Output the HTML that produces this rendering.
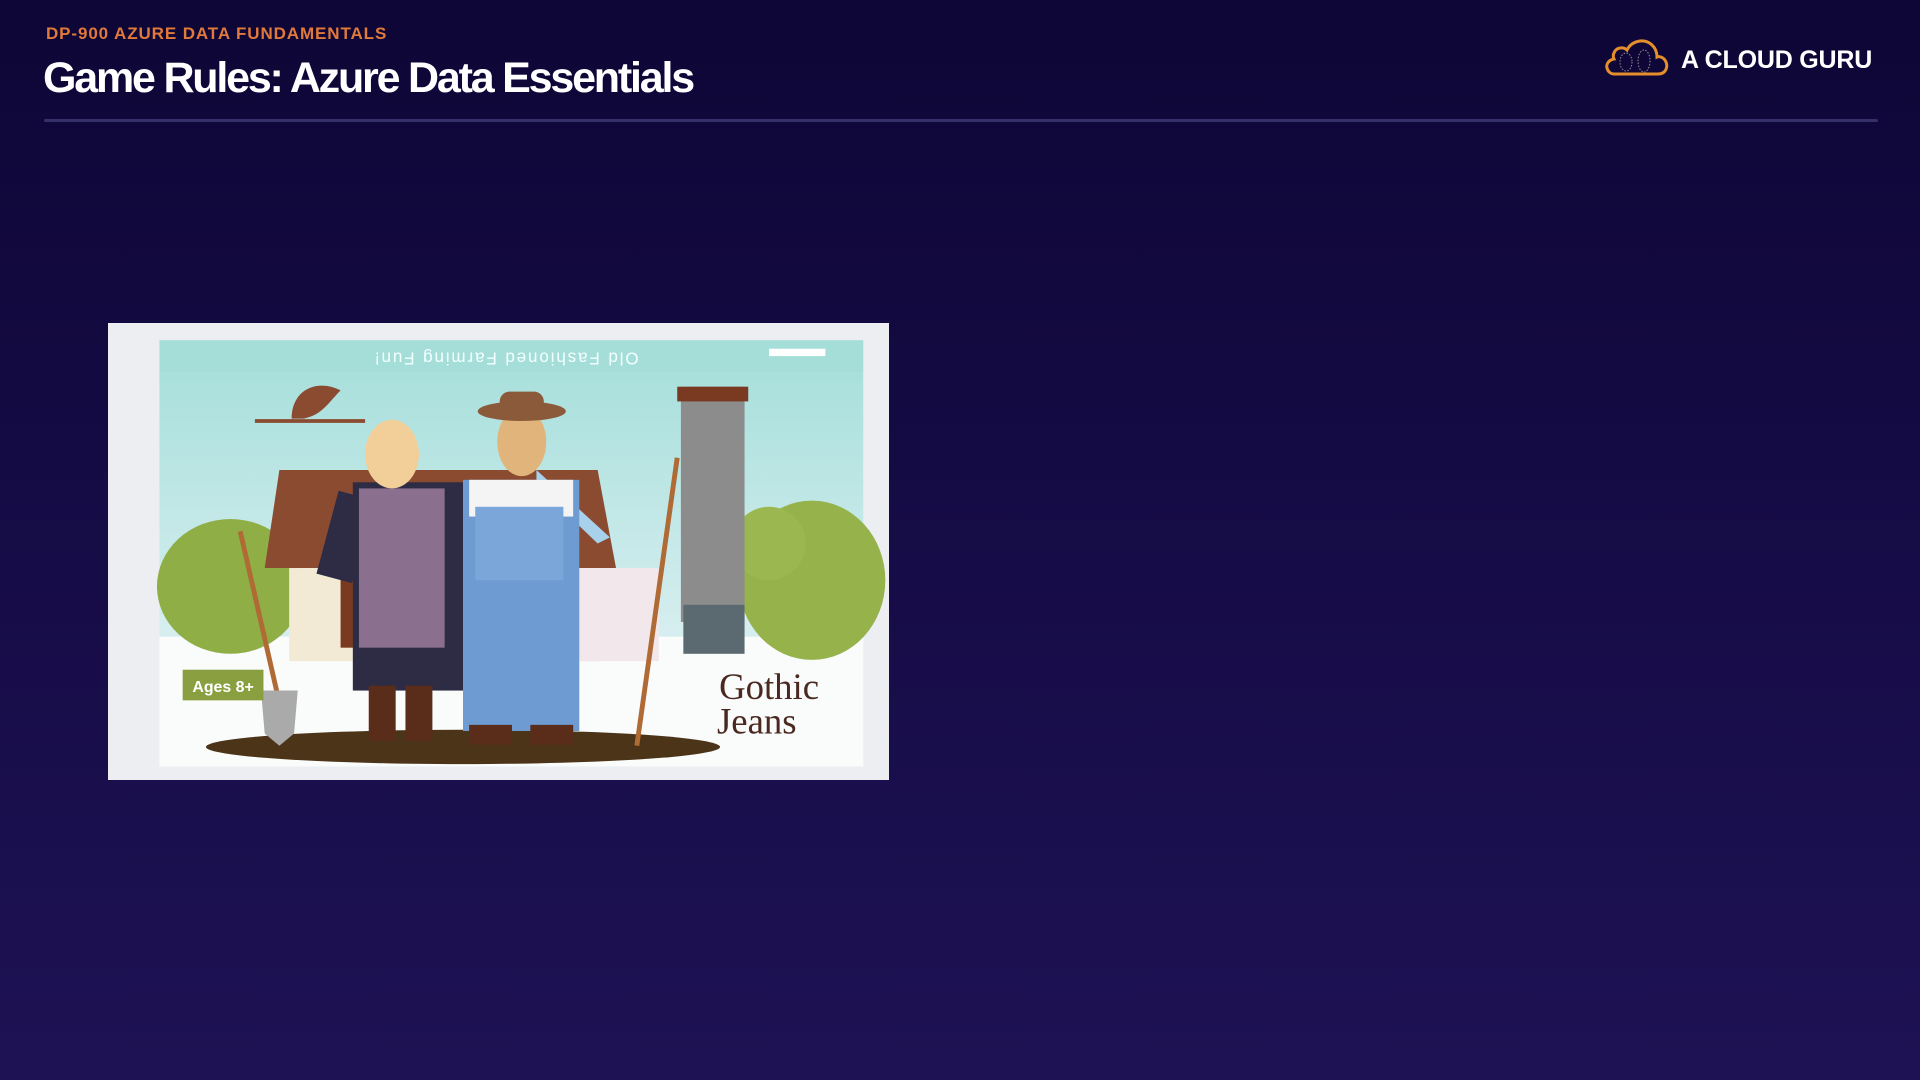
<!DOCTYPE html>
<html><head><meta charset="utf-8"><style>
html,body{margin:0;padding:0;}
body{width:1920px;height:1080px;overflow:hidden;background:linear-gradient(180deg,#0e0636 0%,#150b45 45%,#1e1254 100%);font-family:"Liberation Sans",sans-serif;position:relative;}
.sub{position:absolute;left:46px;top:24px;font-size:17px;font-weight:bold;color:#e0793a;letter-spacing:0.9px;}
.title{position:absolute;left:43px;top:54px;font-size:43px;font-weight:bold;color:#fff;letter-spacing:-2.2px;}
.line{position:absolute;left:44px;top:119px;width:1834px;height:3px;background:#35306a;border-radius:2px;}
.logo{position:absolute;left:1681px;top:46px;font-size:25px;font-weight:bold;color:#fff;letter-spacing:-0.2px;}
.img{position:absolute;left:108px;top:323px;width:781px;height:457px;}
</style></head><body>
<div class="sub">DP-900 AZURE DATA FUNDAMENTALS</div>
<div class="title">Game Rules: Azure Data Essentials</div>
<div class="line"></div>
<svg style="position:absolute;left:1604px;top:37px" width="66" height="40" viewBox="0 0 66 40">
<path d="M10 37 H54 C62 37 64 30 62 25 C60 20 55 19 53 20 C53 10 45 3 36 4 C29 5 25 9 23 13 C20 10 14 10 11 14 C9 17 9 20 10 22 C4 23 2 28 3 31 C4 35 7 37 10 37 Z" fill="none" stroke="#e58f2c" stroke-width="3"/>
<ellipse cx="22" cy="25" rx="6" ry="9" fill="none" stroke="#a08a90" stroke-width="1" stroke-dasharray="1.5 1.5"/>
<ellipse cx="40" cy="24" rx="6" ry="11" fill="none" stroke="#a08a90" stroke-width="1" stroke-dasharray="1.5 1.5"/>
</svg>
<div class="logo">A CLOUD GURU</div>
<svg class="img" viewBox="0 0 638 373" preserveAspectRatio="none">
<defs>
<linearGradient id="sky" x1="0" y1="0" x2="0" y2="1"><stop offset="0" stop-color="#a9e0dc"/><stop offset="1" stop-color="#d7eef0"/></linearGradient>
</defs>
<rect width="638" height="373" fill="#eceef1"/>
<rect x="42" y="14" width="575" height="348" fill="#fafbfb"/>
<rect x="42" y="14" width="575" height="26" fill="#a5ddd8"/>
<rect x="42" y="40" width="575" height="216" fill="url(#sky)"/>
<text x="325" y="34" transform="rotate(180 325 29)" text-anchor="middle" font-size="14" fill="#f4ffff" font-family="Liberation Sans" letter-spacing="1.5">Old Fashioned Farming Fun!</text>
<rect x="540" y="21" width="46" height="6" fill="#fff"/>
<ellipse cx="100" cy="215" rx="60" ry="55" fill="#8fae45"/>
<ellipse cx="575" cy="210" rx="60" ry="65" fill="#95b24b"/>
<ellipse cx="540" cy="180" rx="30" ry="30" fill="#9ab84f"/>
<polygon points="140,120 400,120 415,200 128,200" fill="#8a4b30"/>
<rect x="148" y="200" width="255" height="76" fill="#f3ead6"/>
<rect x="190" y="205" width="70" height="60" fill="#7a3a22"/>
<rect x="380" y="200" width="70" height="76" fill="#f2e8ec"/>
<polygon points="350,120 410,175 400,180 350,132" fill="#a8d2ec"/>
<rect x="468" y="52" width="52" height="192" fill="#8c8c8c"/>
<rect x="465" y="52" width="58" height="12" fill="#7a3a22"/>
<rect x="470" y="230" width="50" height="40" fill="#5a6a70"/>
<ellipse cx="290" cy="346" rx="210" ry="14" fill="#4b3418"/>
<line x1="108" y1="170" x2="140" y2="310" stroke="#b06a35" stroke-width="4"/>
<path d="M125 300 L155 300 L152 335 L140 345 L128 335 Z" fill="#aaaaaa"/>
<rect x="200" y="130" width="92" height="170" fill="#2e2c45"/>
<rect x="188" y="140" width="30" height="70" fill="#2e2c45" transform="rotate(15 200 140)"/>
<rect x="205" y="135" width="70" height="130" fill="#8a6f8e"/>
<rect x="213" y="296" width="22" height="45" fill="#5a2d1a"/>
<rect x="243" y="296" width="22" height="45" fill="#5a2d1a"/>
<ellipse cx="232" cy="107" rx="22" ry="28" fill="#f2cf98"/>
<rect x="290" y="128" width="95" height="205" fill="#6e9bd2"/>
<rect x="295" y="128" width="85" height="30" fill="#f4f4f4"/>
<rect x="300" y="150" width="72" height="60" fill="#7aa6da"/>
<rect x="295" y="328" width="35" height="16" fill="#5a2d1a"/>
<rect x="345" y="328" width="35" height="16" fill="#5a2d1a"/>
<ellipse cx="338" cy="97" rx="20" ry="28" fill="#e0b47a"/>
<ellipse cx="338" cy="72" rx="36" ry="8" fill="#8a5a3a"/>
<rect x="320" y="56" width="36" height="18" rx="8" fill="#8a5a3a"/>
<line x1="465" y1="110" x2="432" y2="345" stroke="#b06a35" stroke-width="4"/>
<line x1="120" y1="80" x2="210" y2="80" stroke="#8a4b30" stroke-width="3"/>
<path d="M150 78 C150 55 170 45 190 55 C180 65 175 75 160 78 Z" fill="#8a4b30"/>
<rect x="61" y="283" width="66" height="25" fill="#8aa040"/>
<text x="94" y="301" text-anchor="middle" font-size="13" font-weight="bold" fill="#fff" font-family="Liberation Sans">Ages 8+</text>
<text x="540" y="307" text-anchor="middle" font-size="30" fill="#4a2a20" font-family="Liberation Serif">Gothic</text>
<text x="530" y="335" text-anchor="middle" font-size="30" fill="#4a2a20" font-family="Liberation Serif">Jeans</text>
</svg>
</body></html>
